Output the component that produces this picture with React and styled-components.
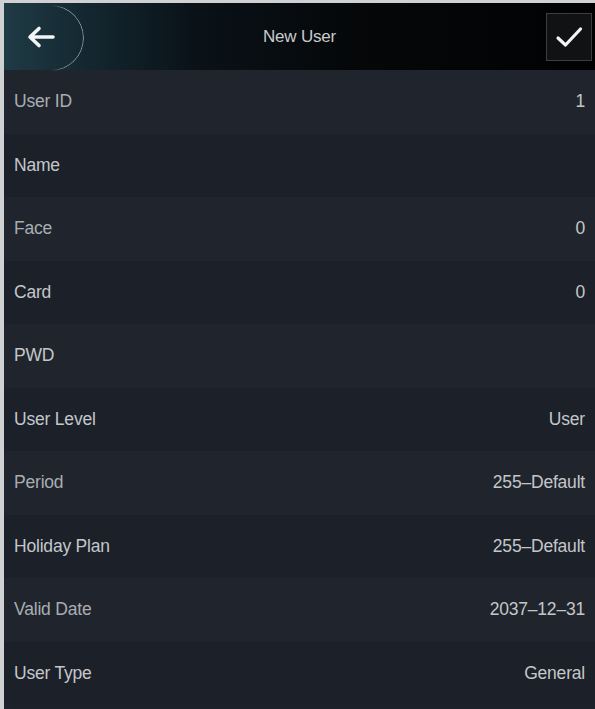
import React from 'react';
import styled, { createGlobalStyle } from 'styled-components';

const GlobalStyle = createGlobalStyle`
  html, body {
    margin: 0;
    padding: 0;
    background: #1e232b;
  }
  * {
    box-sizing: border-box;
  }
`;

const Screen = styled.div`
  width: 595px;
  height: 709px;
  display: flex;
  flex-direction: column;
  border-top: 3px solid #cfd1d3;
  border-left: 4px solid #cfd1d3;
  font-family: 'Liberation Sans', Arial, sans-serif;
  overflow: hidden;
`;

const Header = styled.header`
  height: 67px;
  flex-shrink: 0;
  display: flex;
  align-items: center;
  justify-content: space-between;
  position: relative;
  background: linear-gradient(90deg, #1f3b45 0%, #142730 14%, #0a1218 32%, #050709 60%, #020203 100%);
`;

const BackButton = styled.button`
  position: relative;
  width: 84px;
  height: 67px;
  display: flex;
  align-items: center;
  padding: 0 0 0 22px;
  background: transparent;
  border: none;
  cursor: pointer;

  /* round outline of the back key, only its right half shows */
  &::before {
    content: '';
    position: absolute;
    left: 14px;
    top: 2px;
    width: 64px;
    height: 64px;
    border-radius: 50%;
    border: 1.5px solid rgba(160, 186, 192, 0.8);
    -webkit-mask-image: linear-gradient(90deg, transparent 50%, #000 72%);
    mask-image: linear-gradient(90deg, transparent 50%, #000 72%);
  }
`;

const Title = styled.h1`
  position: absolute;
  left: 0;
  right: 0;
  margin: 0;
  text-align: center;
  font-size: 17px;
  font-weight: 400;
  color: #c9cbcd;
  letter-spacing: -0.2px;
  pointer-events: none;
`;

const ConfirmButton = styled.button`
  width: 46px;
  height: 48px;
  margin-right: 3px;
  display: flex;
  align-items: center;
  justify-content: center;
  background: #111214;
  border: 1px solid #3c3e40;
  padding: 0;
  cursor: pointer;
`;

const List = styled.div`
  flex: 1;
  display: flex;
  flex-direction: column;
`;

const Row = styled.div`
  height: 63.5px;
  flex-shrink: 0;
  display: flex;
  align-items: center;
  justify-content: space-between;
  padding: 0 10px 0 10px;
  background: ${({ $alt }) => ($alt ? '#1b2029' : '#20252d')};
  font-size: 17.5px;
  letter-spacing: -0.2px;
`;

const Label = styled.span`
  color: ${({ $dim }) => ($dim ? '#a9adb2' : '#c4c7ca')};
`;

const Value = styled.span`
  color: #c4c7ca;
`;

const fields = [
  { label: 'User ID', value: '1', dim: true },
  { label: 'Name', value: '' },
  { label: 'Face', value: '0', dim: true },
  { label: 'Card', value: '0' },
  { label: 'PWD', value: '' },
  { label: 'User Level', value: 'User' },
  { label: 'Period', value: '255\u2013Default', dim: true },
  { label: 'Holiday Plan', value: '255\u2013Default' },
  { label: 'Valid Date', value: '2037\u201312\u201331', dim: true },
  { label: 'User Type', value: 'General' },
];

const App = () => (
  <>
    <GlobalStyle />
    <Screen>
      <Header>
        <BackButton aria-label="Back">
          <svg width="30" height="24" viewBox="0 0 30 24" fill="none">
            <path
              d="M27 12H5M13 3.5L4 12l9 8.5"
              stroke="#f2f4f5"
              strokeWidth="3.6"
              strokeLinecap="round"
              strokeLinejoin="round"
            />
          </svg>
        </BackButton>
        <Title>New User</Title>
        <ConfirmButton aria-label="Save">
          <svg width="28" height="22" viewBox="0 0 28 22" fill="none">
            <path
              d="M3 12l7.5 7L25.5 3"
              stroke="#f2f4f5"
              strokeWidth="3.2"
              strokeLinecap="round"
              strokeLinejoin="round"
            />
          </svg>
        </ConfirmButton>
      </Header>
      <List>
        {fields.map((f, i) => (
          <Row key={f.label} $alt={i % 2 === 1}>
            <Label $dim={f.dim}>{f.label}</Label>
            <Value>{f.value}</Value>
          </Row>
        ))}
      </List>
    </Screen>
  </>
);

export default App;
